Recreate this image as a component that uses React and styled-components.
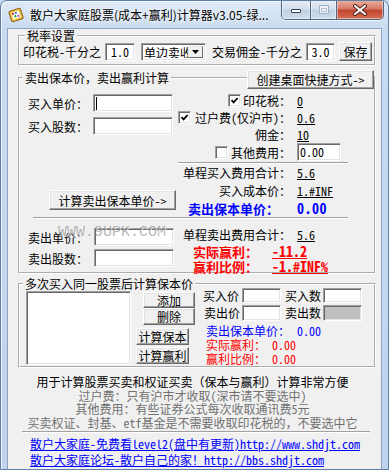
import React from 'react'
import styled, { createGlobalStyle } from 'styled-components'

const UI_FONT = '"Noto Sans Mono CJK SC", "Noto Sans CJK SC", "DejaVu Sans", sans-serif'

const GlobalStyle = createGlobalStyle`
  html, body { margin: 0; padding: 0; }
  body {
    width: 389px;
    height: 470px;
    overflow: hidden;
    background: #c4d7ee;
    font-family: ${UI_FONT};
    font-size: 12px;
    color: #000;
  }
  * { box-sizing: border-box; }
`

// window chrome
const Win = styled.div`
  width: 389px;
  height: 470px;
  border: 1px solid #5f7fa6;
  border-radius: 7px 7px 0 0;
  background: linear-gradient(#dfeaf7 0, #c9dbf0 27px, #bfd3eb 100%);
  box-shadow: inset 1px 1px 0 rgba(255, 255, 255, 0.7);
  overflow: hidden;
  display: flex;
  flex-direction: column;
`
const TitleBar = styled.div`
  height: 27px;
  flex-shrink: 0;
  display: flex;
  align-items: center;
  padding-left: 7px;
`
const TitleText = styled.div`
  margin-left: 6px;
  font-family: "Noto Sans CJK SC", sans-serif;
  font-size: 12px;
  line-height: 16px;
  white-space: nowrap;
  text-shadow: 0 0 6px #fff, 0 0 3px #fff;
`
const CapGroup = styled.div`
  align-self: flex-start;
  display: flex;
  height: 20px;
  margin: -1px 4px 0 auto;
  border: 1px solid #52677f;
  border-top: none;
  border-radius: 0 0 5px 5px;
  overflow: hidden;
  box-shadow: 0 1px 0 rgba(255, 255, 255, 0.6);
`
const CapBtn = styled.div`
  width: ${p => p.$w}px;
  height: 100%;
  display: flex;
  align-items: center;
  justify-content: center;
  border-left: ${p => (p.$first ? 'none' : '1px solid #52677f')};
  background: ${p =>
    p.$close
      ? 'linear-gradient(#eab0a2 0%, #d77b69 45%, #c4452e 55%, #d36f57 100%)'
      : 'linear-gradient(#e6eef7 0%, #d4e0ee 45%, #c1d1e4 55%, #d0ddec 100%)'};
  box-shadow: inset 0 0 0 1px rgba(255, 255, 255, 0.45);
`
const Client = styled.div`
  flex: 1;
  margin: 0 6px 0 6px;
  background: #f0f0f0;
  border: 1px solid #8ea5c2;
  border-bottom: none;
  display: flex;
  flex-direction: column;
`

// group boxes
const GroupWrap = styled.div`
  position: relative;
  margin: ${p => p.$mt || 0}px 5px 0 10px;
`
const Group = styled.fieldset`
  margin: 0;
  min-width: 0;
  padding: ${p => p.$pt || 0}px 0 ${p => p.$pb || 0}px ${p => p.$pl || 0}px;
  border: 2px groove #fff;
`
const Legend = styled.legend`
  padding: 0 2px;
  margin-left: ${p => p.$ml || 0}px;
  line-height: ${p => p.$lh || 14}px;
  font-size: 12px;
`
const HLine = styled.div`
  height: 2px;
  width: ${p => p.$w}px;
  margin: ${p => p.$mt || 0}px 0 0 ${p => p.$ml || 0}px;
  border-top: 1px solid #a0a0a0;
  border-bottom: 1px solid #fff;
`

// classic controls
const Edit = styled.div`
  width: ${p => p.$w}px;
  height: ${p => p.$h || 18}px;
  flex-shrink: 0;
  display: flex;
  align-items: center;
  justify-content: ${p => (p.$center ? 'center' : 'flex-start')};
  padding-left: ${p => (p.$center ? 0 : 2)}px;
  background: ${p => (p.$disabled ? '#c0c0c0' : '#fff')};
  border: 1px solid;
  border-color: #a0a0a0 #fff #fff #a0a0a0;
  box-shadow: inset 1px 1px 0 #696969, inset -1px -1px 0 #e3e3e3;
  line-height: 1;
  white-space: nowrap;
  overflow: hidden;
`
const Caret = styled.span`
  width: 1px;
  height: 13px;
  background: #000;
`
const Btn = styled.button`
  width: ${p => p.$w}px;
  height: ${p => p.$h}px;
  margin: ${p => p.$mt || 0}px 0 0 ${p => p.$ml || 0}px;
  padding: 0;
  flex-shrink: 0;
  font-family: ${UI_FONT};
  font-size: 12px;
  color: #000;
  white-space: nowrap;
  background: #f0f0f0;
  border: 1px solid;
  border-color: #fff #696969 #696969 #fff;
  box-shadow: inset -1px -1px 0 #a0a0a0, inset 1px 1px 0 #e3e3e3;
  display: flex;
  align-items: center;
  justify-content: center;
`
const ShortcutBtn = styled(Btn)`
  position: absolute;
  top: -1px;
  right: 2px;
`
const Check = styled.span`
  width: 13px;
  height: 13px;
  flex-shrink: 0;
  margin-right: ${p => p.$gap ?? 3}px;
  background: #fff;
  border: 1px solid;
  border-color: #a0a0a0 #fff #fff #a0a0a0;
  box-shadow: inset 1px 1px 0 #696969, inset -1px -1px 0 #e3e3e3;
  display: inline-flex;
  align-items: center;
  justify-content: center;
`
const Combo = styled.div`
  width: 65px;
  height: 18px;
  margin: 0 2px;
  padding: 2px;
  display: flex;
  background: #fff;
  border: 1px solid;
  border-color: #a0a0a0 #fff #fff #a0a0a0;
  box-shadow: inset 1px 1px 0 #696969, inset -1px -1px 0 #e3e3e3;
`
const ComboText = styled.div`
  flex: 1;
  overflow: hidden;
  white-space: nowrap;
  line-height: 13px;
`
const DropBtn = styled.div`
  width: 15px;
  background: #f0f0f0;
  border: 1px solid;
  border-color: #e3e3e3 #696969 #696969 #e3e3e3;
  display: flex;
  align-items: center;
  justify-content: center;
`

// tax row
const TaxRow = styled.div`
  height: 19px;
  display: flex;
  align-items: center;
  gap: 4px;
  white-space: nowrap;
`

// sell calc section
const Split = styled.div`
  display: flex;
  margin-top: ${p => p.$mt || 0}px;
`
const LeftCol = styled.div`
  width: 150px;
  flex-shrink: 0;
  padding-top: ${p => p.$pt || 0}px;
  display: flex;
  flex-direction: column;
  align-items: flex-start;
`
const FieldRow = styled.div`
  display: flex;
  align-items: center;
  height: 18px;
  margin-top: ${p => p.$mt || 0}px;
`
const FieldLabel = styled.span`
  width: ${p => p.$w}px;
  white-space: nowrap;
`
const FeeGrid = styled.div`
  width: 170px;
  display: grid;
  grid-template-columns: 113px 1fr;
  grid-template-rows: 17px 17px 17px 18px 3px 17px 18px 18px;
  column-gap: 6px;
  align-items: center;
`
const GridLine = styled.div`
  grid-column: 1 / -1;
  align-self: start;
  height: 2px;
  margin-top: 1px;
  border-top: 1px solid #a0a0a0;
  border-bottom: 1px solid #fff;
`
const FeeLabel = styled.div`
  display: flex;
  align-items: center;
  justify-content: flex-end;
  white-space: nowrap;
  padding-right: ${p => p.$pr || 0}px;
  color: ${p => p.$color || '#000'};
  font-weight: ${p => (p.$bold ? 700 : 400)};
  font-size: ${p => p.$fs || 12}px;
`
const FeeValue = styled.div`
  white-space: nowrap;
  text-decoration: ${p => (p.$u ? 'underline' : 'none')};
  color: ${p => p.$color || '#000'};
  font-weight: ${p => (p.$bold ? 700 : 400)};
  font-size: ${p => p.$fs || 12}px;
  letter-spacing: ${p => p.$ls || 0}px;
`
const SumRow = styled.div`
  width: 170px;
  height: 15px;
  display: grid;
  grid-template-columns: 113px 1fr;
  column-gap: 6px;
  align-items: center;
`
const ProfitRow = styled.div`
  height: 15px;
  padding-left: 15px;
  display: grid;
  grid-template-columns: 79px 1fr;
  align-items: center;
  color: #ff0000;
  font-weight: 700;
  white-space: nowrap;
`
const ProfitLabel = styled.span`
  font-size: 13px;
`
const ProfitValue = styled.span`
  font-size: 14px;
  text-decoration: underline;
`
const Watermark = styled.div`
  position: absolute;
  top: 154px;
  left: 40px;
  font-family: "Liberation Mono", monospace;
  font-size: 15px;
  line-height: 15px;
  color: rgba(120, 120, 120, 0.55);
  text-shadow: 1px 1px 0 rgba(255, 255, 255, 0.6);
  pointer-events: none;
`

// multi buy section
const Multi = styled.div`
  display: flex;
  align-items: flex-start;
`
const ListBox = styled.div`
  width: 105px;
  height: 74px;
  margin-top: 1px;
  flex-shrink: 0;
  background: #fff;
  border: 1px solid;
  border-color: #a0a0a0 #fff #fff #a0a0a0;
  box-shadow: inset 1px 1px 0 #696969, inset -1px -1px 0 #e3e3e3;
`
const BtnCol = styled.div`
  width: 59px;
  margin-left: 5px;
  flex-shrink: 0;
  display: flex;
  flex-direction: column;
  align-items: flex-start;
`
const Panel = styled.div`
  margin: -3px 0 0 8px;
`
const EntryRow = styled.div`
  height: ${p => p.$h}px;
  margin-top: ${p => p.$mt || 0}px;
  display: grid;
  grid-template-columns: 39px 39px 42px 39px;
  align-items: center;
  white-space: nowrap;
`
const EntryLabel = styled.span`
  padding-left: ${p => p.$pl || 0}px;
`
const InfoRow = styled.div`
  height: 14px;
  margin-top: ${p => p.$mt || 0}px;
  padding-left: 3px;
  display: grid;
  grid-template-columns: ${p => p.$w}px 1fr;
  align-items: center;
  line-height: 14px;
  white-space: nowrap;
  color: ${p => p.$color};
`

// footer
const Notes = styled.div`
  margin-top: 7px;
  padding-right: 4px;
  text-align: center;
  line-height: 13.5px;
  white-space: nowrap;
`
const Gray = styled.div`
  color: #707070;
`
const Links = styled.div`
  margin-top: 3px;
  padding-left: 22px;
  line-height: 16px;
  white-space: nowrap;
`
const Link = styled.a`
  display: block;
  width: fit-content;
  color: #0000ff;
  text-decoration: underline;
`

const AppIcon = () => (
  <svg width="16" height="16" viewBox="0 0 16 16">
    <g transform="rotate(-18 8 8)">
      <rect x="2" y="2.5" width="12" height="11" rx="1.5" fill="#f3c23c" stroke="#8a5b0a" />
      <rect x="4" y="4.5" width="8" height="7" fill="#fff" />
      <rect x="4.5" y="5" width="2" height="2" fill="#d8362a" />
      <rect x="7.5" y="5" width="2" height="2" fill="#3a7bd5" />
      <rect x="6" y="8" width="2" height="2" fill="#2e9b3c" />
      <rect x="9" y="8.5" width="2" height="2" fill="#b04ab8" />
    </g>
  </svg>
)

const MinIcon = () => (
  <svg width="12" height="10" viewBox="0 0 12 10">
    <rect x="1.5" y="4.5" width="9" height="3" rx="0.5" fill="#fff" stroke="#2f4057" />
  </svg>
)

const MaxIcon = () => (
  <svg width="12" height="10" viewBox="0 0 12 10">
    <rect x="1.5" y="0.5" width="9" height="8" fill="#edf2f8" stroke="#9fb0c5" />
    <rect x="3.5" y="3.5" width="5" height="3" fill="none" stroke="#b4c2d3" />
  </svg>
)

const CloseIcon = () => (
  <svg width="16" height="12" viewBox="0 0 16 12">
    <path d="M3 2 L13 10 M13 2 L3 10" stroke="#4a1a12" strokeWidth="4" strokeLinecap="round" />
    <path d="M3 2 L13 10 M13 2 L3 10" stroke="#fff" strokeWidth="2.2" strokeLinecap="round" />
  </svg>
)

const Tick = () => (
  <svg width="9" height="9" viewBox="0 0 9 9">
    <path d="M1.5 4.2 L3.6 6.4 L7.6 2" fill="none" stroke="#000" strokeWidth="1.8" />
  </svg>
)

const DownArrow = () => (
  <svg width="7" height="4" viewBox="0 0 7 4">
    <path d="M0 0 H7 L3.5 4 Z" fill="#000" />
  </svg>
)

export default function App() {
  return (
    <>
      <GlobalStyle />
      <Win>
        <TitleBar>
          <AppIcon />
          <TitleText>散户大家庭股票(成本+赢利)计算器v3.05-绿...</TitleText>
          <CapGroup>
            <CapBtn $w={28} $first><MinIcon /></CapBtn>
            <CapBtn $w={26}><MaxIcon /></CapBtn>
            <CapBtn $w={47} $close><CloseIcon /></CapBtn>
          </CapGroup>
        </TitleBar>

        <Client>
          <GroupWrap>
            <Group $pl={3} $pb={3}>
              <Legend $ml={2} $lh={13}>税率设置</Legend>
              <TaxRow>
                <span>印花税-千分之</span>
                <Edit $w={30} $center>1.0</Edit>
                <Combo>
                  <ComboText>单边卖收</ComboText>
                  <DropBtn><DownArrow /></DropBtn>
                </Combo>
                <span>交易佣金-千分之</span>
                <Edit $w={29} $center>3.0</Edit>
                <Btn $w={33} $h={19}>保存</Btn>
              </TaxRow>
            </Group>
          </GroupWrap>

          <GroupWrap $mt={5}>
            <Group $pl={8} $pt={7} $pb={1}>
              <Legend $ml={-5}>卖出保本价，卖出赢利计算</Legend>
              <Split>
                <LeftCol $pt={2}>
                  <FieldRow>
                    <FieldLabel $w={65}>买入单价：</FieldLabel>
                    <Edit $w={80}><Caret /></Edit>
                  </FieldRow>
                  <FieldRow $mt={5}>
                    <FieldLabel $w={65}>买入股数：</FieldLabel>
                    <Edit $w={80} />
                  </FieldRow>
                  <Btn $w={127} $h={20} $mt={55} $ml={21}>计算卖出保本单价-&gt;</Btn>
                </LeftCol>
                <FeeGrid>
                  <FeeLabel><Check $gap={2}><Tick /></Check>印花税：</FeeLabel>
                  <FeeValue $u>0</FeeValue>
                  <FeeLabel><Check $gap={4}><Tick /></Check>过户费(仅沪市)：</FeeLabel>
                  <FeeValue $u>0.6</FeeValue>
                  <FeeLabel>佣金：</FeeLabel>
                  <FeeValue $u>10</FeeValue>
                  <FeeLabel><Check /> 其他费用：</FeeLabel>
                  <Edit $w={44} $h={18}>0.00</Edit>
                  <GridLine />
                  <FeeLabel>单程买入费用合计：</FeeLabel>
                  <FeeValue $u>5.6</FeeValue>
                  <FeeLabel>买入成本价：</FeeLabel>
                  <FeeValue $u>1.#INF</FeeValue>
                  <FeeLabel $color="#0000ff" $bold $fs={13} $pr={12}>卖出保本单价：</FeeLabel>
                  <FeeValue $color="#0000ff" $bold $fs={14} $ls={0.5}>0.00</FeeValue>
                </FeeGrid>
              </Split>
              <HLine $ml={5} $w={315} />
              <Split $mt={7}>
                <LeftCol $pt={2}>
                  <FieldRow>
                    <FieldLabel $w={66}>卖出单价：</FieldLabel>
                    <Edit $w={80} />
                  </FieldRow>
                  <FieldRow $mt={3}>
                    <FieldLabel $w={66}>卖出股数：</FieldLabel>
                    <Edit $w={80} />
                  </FieldRow>
                </LeftCol>
                <div>
                  <SumRow>
                    <FeeLabel>单程卖出费用合计：</FeeLabel>
                    <FeeValue $u>5.6</FeeValue>
                  </SumRow>
                  <ProfitRow>
                    <ProfitLabel>实际赢利：</ProfitLabel>
                    <ProfitValue>-11.2</ProfitValue>
                  </ProfitRow>
                  <ProfitRow>
                    <ProfitLabel>赢利比例：</ProfitLabel>
                    <ProfitValue>-1.#INF%</ProfitValue>
                  </ProfitRow>
                </div>
              </Split>
            </Group>
            <ShortcutBtn $w={127} $h={19}>创建桌面快捷方式-&gt;</ShortcutBtn>
            <Watermark>WWW.9UPK.COM</Watermark>
          </GroupWrap>

          <GroupWrap $mt={4}>
            <Group $pl={6}>
              <Legend $ml={-3} $lh={12}>多次买入同一股票后计算保本价</Legend>
              <Multi>
                <ListBox />
                <BtnCol>
                  <Btn $w={52} $h={16} $ml={7} $mt={2}>添加</Btn>
                  <Btn $w={52} $h={17} $ml={7}>删除</Btn>
                  <Btn $w={53} $h={17} $mt={3}>计算保本</Btn>
                  <Btn $w={53} $h={17} $mt={2}>计算赢利</Btn>
                </BtnCol>
                <Panel>
                  <EntryRow $h={15}>
                    <EntryLabel>买入价</EntryLabel>
                    <Edit $w={39} $h={15} />
                    <EntryLabel $pl={4}>买入数</EntryLabel>
                    <Edit $w={39} $h={15} />
                  </EntryRow>
                  <EntryRow $h={16} $mt={2}>
                    <EntryLabel $pl={1}>卖出价</EntryLabel>
                    <Edit $w={39} $h={16} />
                    <EntryLabel $pl={4}>卖出数</EntryLabel>
                    <Edit $w={39} $h={16} $disabled />
                  </EntryRow>
                  <InfoRow $w={91} $color="#0000ff" $mt={4}>
                    <span>卖出保本单价：</span>
                    <span>0.00</span>
                  </InfoRow>
                  <InfoRow $w={66} $color="#ff0000">
                    <span>实际赢利：</span>
                    <span>0.00</span>
                  </InfoRow>
                  <InfoRow $w={66} $color="#ff0000">
                    <span>赢利比例：</span>
                    <span>0.00</span>
                  </InfoRow>
                </Panel>
              </Multi>
            </Group>
          </GroupWrap>

          <Notes>
            <div>用于计算股票买卖和权证买卖（保本与赢利）计算非常方便</div>
            <Gray>过户费：只有沪市才收取(深市请不要选中)</Gray>
            <Gray>其他费用：有些证券公式每次收取通讯费5元</Gray>
            <Gray>买卖权证、封基、etf基金是不需要收取印花税的，不要选中它</Gray>
          </Notes>
          <HLine $ml={14} $w={348} $mt={2} />
          <Links>
            <Link href="#">散户大家庭-免费看level2(盘中有更新)http://www.shdjt.com</Link>
            <Link href="#">散户大家庭论坛-散户自己的家！http://bbs.shdjt.com</Link>
          </Links>
        </Client>
      </Win>
    </>
  )
}
